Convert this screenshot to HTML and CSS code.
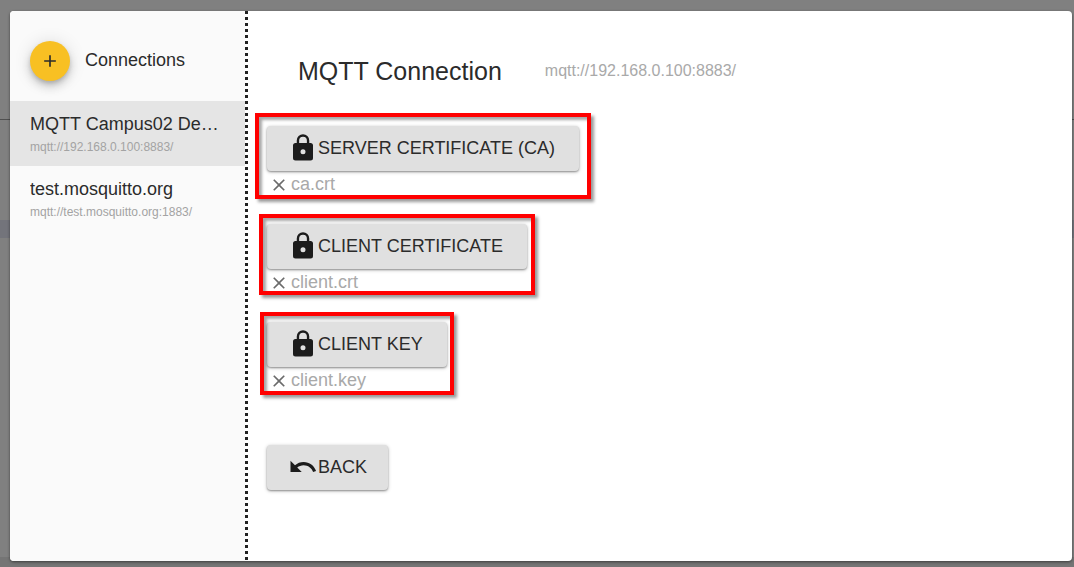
FILE: index.html
```html
<!DOCTYPE html>
<html lang="en">
<head>
<meta charset="utf-8">
<meta name="viewport" content="width=device-width, initial-scale=1">
<title>MQTT Connection</title>
<link rel="stylesheet" href="styles.css">
</head>
<body>
<svg class="symbols" aria-hidden="true">
  <symbol id="lock" viewBox="0 0 24 24"><path d="M18 8h-1V6A5 5 0 0 0 7 6v2H6a2 2 0 0 0-2 2v10a2 2 0 0 0 2 2h12a2 2 0 0 0 2-2V10a2 2 0 0 0-2-2zm-6 9a2 2 0 1 1 0-4 2 2 0 0 1 0 4zm3.100-9H8.900V6a3.100 3.100 0 0 1 6.200 0z"/></symbol>
  <symbol id="close" viewBox="0 0 24 24"><path d="M19 6.410 17.590 5 12 10.590 6.410 5 5 6.410 10.590 12 5 17.590 6.410 19 12 13.410 17.590 19 19 17.590 13.410 12z"/></symbol>
  <symbol id="undo" viewBox="0 0 24 24"><path d="M12.500 8c-2.650 0-5.050.990-6.900 2.600L2 7v9h9l-3.620-3.620c1.390-1.160 3.160-1.880 5.120-1.880 3.540 0 6.550 2.310 7.600 5.500l2.370-.780C21.080 11.030 17.150 8 12.500 8z"/></symbol>
  <symbol id="plus" viewBox="0 0 24 24"><path d="M19 13h-6v6h-2v-6H5v-2h6V5h2v6h6z"/></symbol>
</svg>
<div class="backdrop">
  <div class="dialog" role="dialog" aria-labelledby="title">
    <aside class="sidebar">
      <header class="sidebar-header">
        <button class="fab" type="button" aria-label="Add connection"><svg class="icon-small"><use href="#plus"/></svg></button>
        <h2 class="sidebar-title">Connections</h2>
      </header>
      <nav class="profiles">
        <a class="profile profile-selected" href="#campus"><span class="profile-name">MQTT Campus02 Demo</span><span class="profile-url">mqtt://192.168.0.100:8883/</span></a>
        <a class="profile" href="#mosquitto"><span class="profile-name">test.mosquitto.org</span><span class="profile-url">mqtt://test.mosquitto.org:1883/</span></a>
      </nav>
    </aside>
    <main class="content">
      <header class="content-header">
        <h1 class="title" id="title">MQTT Connection</h1>
        <span class="address">mqtt://192.168.0.100:8883/</span>
      </header>
      <div class="certificates">
        <section class="certificate certificate-server">
          <button class="button" type="button"><svg class="icon"><use href="#lock"/></svg>SERVER CERTIFICATE (CA)</button>
          <div class="file"><button class="clear" type="button" aria-label="Clear ca.crt"><svg class="icon-small"><use href="#close"/></svg></button><span class="file-name">ca.crt</span></div>
        </section>
        <section class="certificate certificate-client">
          <button class="button" type="button"><svg class="icon"><use href="#lock"/></svg>CLIENT CERTIFICATE</button>
          <div class="file"><button class="clear" type="button" aria-label="Clear client.crt"><svg class="icon-small"><use href="#close"/></svg></button><span class="file-name">client.crt</span></div>
        </section>
        <section class="certificate certificate-key">
          <button class="button" type="button"><svg class="icon"><use href="#lock"/></svg>CLIENT KEY</button>
          <div class="file"><button class="clear" type="button" aria-label="Clear client.key"><svg class="icon-small"><use href="#close"/></svg></button><span class="file-name">client.key</span></div>
        </section>
      </div>
      <button class="button" type="button"><svg class="icon"><use href="#undo"/></svg>BACK</button>
    </main>
  </div>
</div>
</body>
</html>
```
FILE: styles.css
```css
* {
  box-sizing: border-box;
}

body {
  margin: 0;
  color: #2b2b2b;
  font: 18px/24px "Liberation Sans", Arial, sans-serif;
}

button {
  border: 0;
  color: inherit;
  font: inherit;
  cursor: pointer;
}

.symbols {
  display: none;
}

.backdrop {
  display: flex;
  min-height: 100vh;
  padding: 11px 2px 6px 10px;
  background:
    linear-gradient(#757575, #757575) 0 100% / 100% 10px no-repeat,
    linear-gradient(#505050, #505050) 0 119px / 100% 1px no-repeat,
    linear-gradient(#73747b, #73747b) 0 220px / 100% 18px no-repeat,
    #808080;
}

.dialog {
  display: flex;
  flex: 1;
  overflow: hidden;
  border-radius: 4px;
  background: #fff;
  box-shadow: 0 1px 3px rgba(0, 0, 0, .5);
}

.sidebar {
  width: 238px;
  flex: none;
  padding-right: 3px;
  background:
    repeating-linear-gradient(#212121 0 3px, #fff 3px 6px) 100% 0 / 3px 100% no-repeat,
    #fafafa;
}

.sidebar-header {
  display: flex;
  align-items: center;
  gap: 15px;
  height: 90px;
  padding: 10px 20px 0;
}

.fab {
  display: flex;
  align-items: center;
  justify-content: center;
  width: 40px;
  height: 40px;
  padding: 0;
  border-radius: 50%;
  background: #f8c023;
  box-shadow: 0 3px 5px -1px rgba(0, 0, 0, .2), 0 6px 10px rgba(0, 0, 0, .14), 0 1px 18px rgba(0, 0, 0, .12);
}

.sidebar-title,
.title {
  margin: 0;
  font-weight: 400;
}

.sidebar-title {
  padding-bottom: 2px;
  font-size: 18px;
}

.profile {
  display: block;
  height: 65px;
  padding: 11px 20px 8px;
  color: inherit;
  text-decoration: none;
}

.profile-selected {
  background: #e5e5e5;
}

.profile-name,
.profile-url {
  display: block;
  overflow: hidden;
  text-overflow: ellipsis;
  white-space: nowrap;
}

.profile-url {
  color: #a3a3a3;
  font-size: 12px;
  line-height: 22px;
}

.content {
  flex: 1;
  min-width: 0;
  padding: 40px 19px;
}

.content-header {
  display: flex;
  align-items: center;
  gap: 43px;
  padding-left: 31px;
}

.title {
  font-size: 25px;
  line-height: 40px;
}

.address {
  color: #a9a9a9;
  font-size: 16px;
}

.certificates {
  display: flex;
  flex-direction: column;
  align-items: flex-start;
  gap: 26px;
  margin: 35px 0 51px;
}

.certificate {
  position: relative;
}

/* Highlight frame drawn around each certificate */
.certificate::after {
  position: absolute;
  border: 4px solid #f00;
  box-shadow: 3px 3px 3px rgba(0, 0, 0, .4), inset 3px 3px 3px rgba(0, 0, 0, .35);
  content: "";
  pointer-events: none;
}

.certificate-server::after {
  inset: -13px -12px -1px -12px;
}

.certificate-client::after {
  inset: -10px -8px 1px -8px;
}

.certificate-key::after {
  inset: -10px -7px -1px -7px;
}

.button {
  display: flex;
  align-items: center;
  height: 45px;
  padding: 0 21px 2px;
  border-radius: 4px;
  background: #e0e0e0;
  box-shadow: 0 1px 2px rgba(0, 0, 0, .35), 0 1px 4px rgba(0, 0, 0, .2);
  white-space: nowrap;
}

.certificate .button {
  padding-right: 24px;
}

.icon {
  width: 30px;
  height: 30px;
  fill: #1c1c1c;
}

.icon-small {
  display: block;
  width: 20px;
  height: 20px;
  fill: currentColor;
}

.file {
  display: flex;
  align-items: center;
  gap: 2px;
  height: 27px;
  padding-left: 2px;
  color: #a9a9a9;
}

.file-name {
  padding-bottom: 2px;
}

.clear {
  padding: 0;
  background: none;
  color: #6b6b6b;
}
```
